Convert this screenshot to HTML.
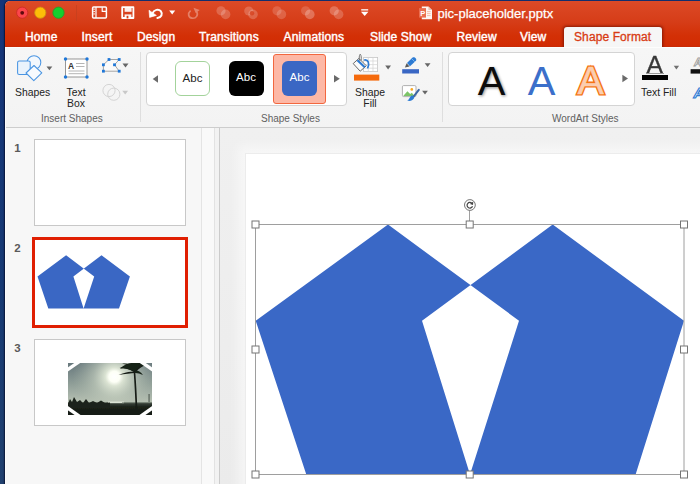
<!DOCTYPE html>
<html><head><meta charset="utf-8"><title>pic-placeholder.pptx</title>
<style>
html,body{margin:0;padding:0}
body{width:700px;height:484px;overflow:hidden;position:relative;background:linear-gradient(#15357a,#173a74 60%,#21416f);font-family:"Liberation Sans",sans-serif}
body *{position:absolute}
#win{left:5px;top:1px;width:700px;height:490px;background:#f1f1f1;border-radius:5px 0 0 0;overflow:hidden;box-shadow:-0.5px 0 1.5px rgba(0,0,25,.65)}
#tb{left:0;top:0;width:700px;height:46px;background:linear-gradient(#dc4a27 0,#d63d18 45%,#d33006 75%,#d22b03 96%,#c62a06 100%)}
.tab{letter-spacing:0.14px;top:30.3px;height:14px;line-height:14px;font-size:12px;color:#fff;white-space:nowrap;-webkit-text-stroke:0.3px #fff;text-shadow:0 0 1px rgba(255,235,225,.5)}
#atabw{left:550px;top:18px;width:130px;height:29px;overflow:hidden}
#atab{left:14px;top:9px;width:98px;height:24px;background:#f6f6f6;border-radius:3px 3px 0 0;box-shadow:0 -0.5px 3px 0.5px rgba(110,15,0,.75)}
#rib{left:0;top:46px;width:700px;height:79px;border-top:1px solid #fdfdfd;background:linear-gradient(#f6f6f6,#f3f3f3);border-bottom:1px solid #cdcdcd}
.lbl{font-size:10.4px;color:#222;white-space:nowrap;line-height:11px;text-align:center}
.grp{font-size:10px;color:#616161;white-space:nowrap;line-height:11px;top:112.7px}
.sep{width:1px;background:#dedede;top:52px;height:70px}
.gal{background:#fff;border:1px solid #d4d4d4;border-radius:4px;box-sizing:border-box}
.abc{width:35px;height:35px;top:61.4px;box-sizing:border-box;border-radius:6px;font-size:11.5px;line-height:33.8px;text-align:center}
.num{left:14.3px;font-size:11.5px;font-weight:bold;color:#5a5a5a;line-height:12px}
.th{background:#fff;border:1px solid #c8c8c8;box-sizing:border-box}
svg{left:0;top:0;overflow:visible}
</style></head><body>
<div id="win"><div id="tb"></div><div id="rib"></div></div>
<div id="atabw"><div id="atab"></div></div>
<div class="tab" style="left:25px">Home</div>
<div class="tab" style="left:81.5px">Insert</div>
<div class="tab" style="left:137px">Design</div>
<div class="tab" style="left:199px">Transitions</div>
<div class="tab" style="left:283.5px">Animations</div>
<div class="tab" style="left:370px">Slide Show</div>
<div class="tab" style="left:456.5px">Review</div>
<div class="tab" style="left:520px">View</div>
<div class="tab" style="left:574px;color:#d83b14;-webkit-text-stroke:0.3px #d83b14;text-shadow:none;letter-spacing:0.1px">Shape Format</div>
<div id="title" style="left:437.5px;top:6px;font-size:13px;line-height:16px;color:#fff;white-space:nowrap;-webkit-text-stroke:0.25px #fff">pic-placeholder.pptx</div>
<svg id="tbi" width="700" height="48" viewBox="0 0 700 48">
 <!-- traffic lights -->
 <circle cx="22.2" cy="12.7" r="5.6" fill="#fc464b" stroke="#cc2a25" stroke-width="0.9"/>
 <circle cx="22.2" cy="12.8" r="1.9" fill="#5e090c"/>
 <circle cx="40.3" cy="12.7" r="5.6" fill="#fdbd08" stroke="#cf8f14" stroke-width="0.9"/>
 <circle cx="58.5" cy="12.7" r="5.6" fill="#14cf2e" stroke="#23a128" stroke-width="0.9"/>
 <line x1="76.5" y1="5" x2="76.5" y2="21" stroke="#c4401f" stroke-width="1" opacity=".7"/>
 <!-- sidebar/file icon -->
 <g fill="none" stroke="#fff" stroke-width="1.5" stroke-linejoin="round">
  <rect x="92.6" y="7" width="13.8" height="11" rx="1"/>
  <path d="M96 7 V18" stroke-width="1.2"/>
  <path d="M102.2 7.2 V11.4 H106.2" stroke-width="1.2"/>
 </g>
 <g fill="#fff"><rect x="93.4" y="8.6" width="1.4" height="1.1"/><rect x="93.4" y="11" width="1.4" height="1.1"/><rect x="93.4" y="13.4" width="1.4" height="1.1"/></g>
 <!-- save icon -->
 <path d="M122.2 7.2 H133.4 V18 H122.2 Z" fill="none" stroke="#fff" stroke-width="1.8" stroke-linejoin="round"/>
 <rect x="124.6" y="7.4" width="7" height="4.4" fill="#fff" opacity=".92"/>
 <path d="M124.6 18.2 V14.4 H131.4 V18.2 Z" fill="#fff" opacity=".95"/>
 <rect x="126.6" y="15.8" width="1.8" height="2.6" fill="#d4401a"/>
 <!-- undo -->
 <path d="M152.4 13.4 C154 9.6 158.6 8.6 160.8 11.2 C163 14 161.4 17.6 157.4 17.9" fill="none" stroke="#fff" stroke-width="2" stroke-linecap="round"/>
 <path d="M149 10.2 L149.6 17.4 L156.4 15.4 Z" fill="#fff" stroke="#fff" stroke-width="0.6" stroke-linejoin="round"/>
 <path d="M169.2 10.6 H175.2 L172.2 14.4 Z" fill="#fff"/>
 <!-- redo faded -->
 <g opacity=".33">
 <path d="M190.2 11.2 C187.6 13.4 188.2 17.6 192 18.2 C196.2 18.8 198.6 15 196.6 11.6" fill="none" stroke="#fff" stroke-width="1.7" stroke-linecap="round"/>
 <path d="M194.6 7 L194.4 12.6 L199.4 11.6 Z" fill="#fff" transform="rotate(-25 196 10)"/>
 </g>
 <g fill="#fff">
  <circle cx="221" cy="10.8" r="4.6" opacity=".2"/><circle cx="225.6" cy="14.4" r="4.8" opacity=".2"/>
  <circle cx="248.8" cy="11" r="4.6" opacity=".2"/><circle cx="253" cy="14.4" r="4.8" opacity=".2"/>
  <circle cx="277" cy="10.8" r="4.6" opacity=".16"/><circle cx="281.4" cy="14.4" r="4.8" opacity=".18"/>
  <circle cx="305.6" cy="10.8" r="4.6" opacity=".16"/><circle cx="309.8" cy="14.4" r="4.8" opacity=".26"/>
  <circle cx="334.2" cy="10.8" r="4.6" opacity=".24"/><circle cx="338.6" cy="14.4" r="4.8" opacity=".2"/>
 </g>
 <circle cx="252" cy="13.2" r="2.2" fill="#d74320" opacity=".85"/>
 <!-- customize arrow -->
 <rect x="361.2" y="9.2" width="7" height="1.3" fill="#fff"/>
 <path d="M361 11.8 H368.4 L364.7 16 Z" fill="#fff"/>
 <!-- doc icon -->
 <path d="M421.8 6.5 H428.4 L432 10 V19.3 H421.8 Z" fill="#fdf6f3"/>
 <path d="M428.4 6.5 V10 H432 Z" fill="#e9c4b8"/>
 <path d="M427 11.6 H430.6 M427 13.6 H430.6 M427 15.6 H430.6" stroke="#f3b9a2" stroke-width="0.9"/>
 <rect x="419" y="8.1" width="7" height="9.5" fill="#ea6e50"/>
 <text x="420.3" y="15.5" font-family="Liberation Sans, sans-serif" font-size="7.5" font-weight="bold" fill="#fff">P</text>
</svg>
<!-- RIBBON -->
<div class="sep" style="left:139.5px"></div>
<div class="sep" style="left:442px"></div>
<div class="lbl" style="left:15px;top:87px">Shapes</div>
<div class="lbl" style="left:66px;top:87px;width:20px">Text<br>Box</div>
<div class="grp" style="left:41px">Insert Shapes</div>
<div class="grp" style="left:261px">Shape Styles</div>
<div class="grp" style="left:552px">WordArt Styles</div>
<div class="gal" style="left:146px;top:52px;width:201px;height:54px"></div>
<div style="left:273px;top:54px;width:53px;height:50px;background:#fdb8a6;border:1px solid #f2673f;box-sizing:border-box;border-radius:3px"></div>
<div class="abc" style="left:175px;background:#fff;border:1.5px solid #a3d39b;color:#222">Abc</div>
<div class="abc" style="left:228.5px;background:#000;color:#fff">Abc</div>
<div class="abc" style="left:282px;background:#3a67c4;color:#fff">Abc</div>
<div class="lbl" style="left:354px;top:87px;width:32px">Shape<br>Fill</div>
<div class="gal" style="left:448px;top:52px;width:187px;height:54px"></div>
<div class="lbl" style="left:641px;top:87px">Text Fill</div>
<div style="left:647.3px;top:50.8px;font-size:23.2px;line-height:28px;color:#383838;-webkit-text-stroke:0.35px #383838;transform:scaleX(1.06);transform-origin:50% 50%">A</div><div style="left:646px;top:73px;width:18px;height:1px;background:#999"></div>
<div style="left:642px;top:74.7px;width:26px;height:5.6px;background:#000"></div>
<svg width="700" height="130" viewBox="0 0 700 130">
 <!-- Shapes icon -->
 <g fill="#eaf3fc" stroke="#4a95e2" stroke-width="1.05" stroke-linejoin="round">
  <circle cx="34" cy="62.5" r="6.8" fill="#f3f8fd"/>
  <rect x="17.6" y="61" width="12.6" height="13.5" rx="1.6"/>
  <path d="M34 65.5 L41.8 72.8 L33.8 80.6 L26 73 Z" fill="#f6fafe"/>
 </g>
 <path d="M46.5 66.4 H52.3 L49.4 70.2 Z" fill="#666"/>
 <!-- Text box icon -->
 <rect x="65.5" y="59" width="21.5" height="18" fill="#fff" stroke="#8c8c8c" stroke-width="0.9"/>
 <g fill="#1f77d8"><circle cx="65.5" cy="59" r="1.7"/><circle cx="87" cy="59" r="1.7"/><circle cx="65.5" cy="77" r="1.7"/><circle cx="87" cy="77" r="1.7"/></g>
 <text x="68" y="69" font-family="Liberation Sans, sans-serif" font-size="8.5" font-weight="bold" fill="#333">A</text>
 <g stroke="#b5b5b5" stroke-width="1"><path d="M76 63.5H84.5M76 66.5H84.5M68.5 71H84.5M68.5 73.7H84.5"/></g>
 <!-- edit points icon -->
 <path d="M109 59.5 L119.2 59.5 L114.5 64.8 L119.2 71.2 L103.4 71.2 L103.4 64.8 Z" fill="#fafafa" stroke="#9a9a9a" stroke-width="0.9"/>
 <g fill="#1f77d8"><rect x="107.6" y="58.1" width="2.8" height="2.8"/><rect x="117.8" y="58.1" width="2.8" height="2.8"/><rect x="113.1" y="63.4" width="2.8" height="2.8"/><rect x="117.8" y="69.8" width="2.8" height="2.8"/><rect x="102" y="69.8" width="2.8" height="2.8"/><rect x="102" y="63.4" width="2.8" height="2.8"/></g>
 <path d="M122.5 63.5 H128.5 L125.5 67.5 Z" fill="#666"/>
 <!-- merge shapes (disabled) -->
 <g fill="none" stroke="#d4d4d4" stroke-width="1"><circle cx="109" cy="90.5" r="6.1"/><circle cx="113.8" cy="94.2" r="6.1"/></g>
 <path d="M122.3 90.8 H128.1 L125.2 94.6 Z" fill="#c8c8c8"/>
 <!-- gallery arrows -->
 <path d="M152.7 79 L158 75.2 V82.8 Z" fill="#6a6a6a"/>
 <path d="M339.8 78.8 L334 75 V82.6 Z" fill="#6a6a6a"/>
 <path d="M628 78.5 L622.4 74.8 V82.2 Z" fill="#6a6a6a"/>
 <!-- Shape fill icon -->
 <rect x="354" y="74.6" width="25.3" height="6" fill="#f56a0c"/>
 <g>
  <rect x="363.6" y="57.4" width="14" height="14.2" fill="#fff" stroke="#c6c6c6" stroke-width="0.8"/>
  <path d="M363.6 61H377.6M363.6 64.6H377.6M363.6 68.2H377.6M368.3 57.4V71.6M373 57.4V71.6" stroke="#d2d2d2" stroke-width="0.7"/>
  <path d="M353.2 63.6 L358.9 58.4 L366.3 65.8 L360.2 71.2 Z" fill="#fbfbfb" stroke="#6a6a6a" stroke-width="1" stroke-linejoin="round"/>
  <path d="M357.4 60.2 L364.8 67.2" stroke="#2d7bd3" stroke-width="2.2" fill="none"/>
  <path d="M364.6 60 C368.4 59.6 369.6 63.4 367.8 67.6" fill="none" stroke="#2d7bd3" stroke-width="1.7" stroke-linecap="round"/>
  <path d="M359.8 60.8 C359 58 359 55.6 360.2 54.2 C361.4 55.4 361.4 58 361.2 60.4" fill="none" stroke="#6a6a6a" stroke-width="0.9"/>
 </g>
 <path d="M385.2 65.6 H391 L388.1 69.4 Z" fill="#666"/>
 <!-- Pen outline icon -->
 <rect x="402.2" y="69.2" width="16.8" height="4.3" fill="#3a67c4"/>
 <path d="M407 62.9 L412.6 57.6 C414.2 56.2 417.4 59.2 415.9 60.8 L410 66.2 Z" fill="#2d7bd3"/>
 <path d="M404.9 67.6 L406.6 63.3 L409.6 66.4 Z" fill="#5a5a5a"/>
 <path d="M411.6 58.6 L414.8 61.8" stroke="#8cc0f2" stroke-width="0.8"/>
 <path d="M424.7 63.2 H430.5 L427.6 67 Z" fill="#666"/>
 <!-- effects icon -->
 <rect x="402.4" y="85.6" width="13.6" height="11" rx="1.2" fill="#fff" stroke="#a8a8a8" stroke-width="0.9"/>
 <path d="M403.2 96 L407.4 91.2 L410.2 94 L411.8 92.8 L414.6 96 Z" fill="#7cc467"/>
 <circle cx="411.8" cy="89.4" r="1.35" fill="#f8a825"/>
 <path d="M418.8 89.8 L413 97.4" stroke="#3d66a3" stroke-width="2" stroke-linecap="round" fill="none"/>
 <path d="M411.6 95.4 C413.6 95.6 414.6 97 413.8 98.6 C412.6 100.8 409.8 101.4 407.2 100.6 C409.2 99.6 409.6 97 411.6 95.4 Z" fill="#2d7bd3"/>
 <path d="M422.1 90.8 H427.9 L425 94.6 Z" fill="#666"/>
 <!-- text fill dropdown -->
 <path d="M673.7 65.8 H679.1 L676.4 69.4 Z" fill="#707070"/>
 <!-- partial right icons -->
 <text x="694" y="65.6" font-family="Liberation Sans, sans-serif" font-size="11" font-style="italic" font-weight="bold" fill="#fff" stroke="#9a9a9a" stroke-width="0.8">A</text>
 <rect x="690.6" y="69.2" width="10" height="4.4" fill="#111"/>
 <text x="693.5" y="98" font-family="Liberation Sans, sans-serif" font-size="15" font-style="italic" font-weight="bold" fill="#dcebfb" stroke="#2d7bd3" stroke-width="1.1">A</text>
 <!-- wordart As -->
 <g font-family="Liberation Sans, sans-serif" font-size="41.5">
  <text x="477.8" y="94.6" fill="#000" opacity=".45" filter="url(#wab)">A</text>
  <text x="477.8" y="94.6" fill="#0c0c0c">A</text>
  <text x="527.8" y="94.8" fill="#3b6fca">A</text>
  <text x="577.4" y="94.3" font-size="38.5" textLength="26.4" lengthAdjust="spacingAndGlyphs" fill="#f57414" stroke="#f57414" stroke-width="3.2" stroke-linejoin="miter">A</text>
  <text x="577.4" y="94.3" font-size="38.5" textLength="26.4" lengthAdjust="spacingAndGlyphs" fill="#fbcdb0" stroke="#fbcdb0" stroke-width="0.4">A</text>
 </g>
 <defs><filter id="wab" x="-20%" y="-20%" width="140%" height="140%"><feOffset dx="0.8" dy="1"/><feGaussianBlur stdDeviation="1.4"/></filter></defs>
</svg>
<!-- CONTENT -->
<div id="left" style="left:5px;top:128px;width:196px;height:360px;background:#f7f7f7"></div>
<div style="left:201px;top:128px;width:13px;height:360px;background:#f9f9f9;border-left:1px solid #e4e4e4;box-sizing:border-box"></div>
<div style="left:214px;top:128px;width:5px;height:360px;background:#f2f2f2;border-left:1px solid #e2e2e2;box-sizing:border-box"></div>
<div id="edit" style="left:219px;top:128px;width:490px;height:360px;background:linear-gradient(#f0f0f0,#ebebeb);border-left:1px solid #cbcbcb;box-sizing:border-box"></div>
<div id="slide" style="left:245px;top:153px;width:470px;height:340px;background:#fff;border:1px solid #ececec;box-sizing:border-box;box-shadow:0 0 10px 7px rgba(255,255,255,.5)"></div>
<div style="left:5px;top:47px;width:1px;height:440px;background:#fcfcfc"></div>
<div class="num" style="top:142px">1</div>
<div class="num" style="top:242px">2</div>
<div class="num" style="top:342px">3</div>
<div class="th" style="left:34px;top:138.5px;width:152px;height:87px"></div>
<div class="th" style="left:32px;top:237px;width:156px;height:91px;border:3px solid #e01f02"></div>
<div class="th" style="left:34px;top:338.5px;width:152px;height:87px"></div>
<svg width="700" height="484" viewBox="0 0 700 484">
 <defs>
  <linearGradient id="sky" x1="0" y1="0" x2="0" y2="1">
   <stop offset="0" stop-color="#63747a"/><stop offset="0.4" stop-color="#8e9d97"/><stop offset="0.73" stop-color="#b6c0b2"/><stop offset="0.75" stop-color="#3a443a"/><stop offset="0.82" stop-color="#1b2119"/><stop offset="1" stop-color="#141812"/>
  </linearGradient>
  <radialGradient id="sun" cx="114.4" cy="376.7" r="42" gradientUnits="userSpaceOnUse">
   <stop offset="0" stop-color="#ffffff"/><stop offset="0.13" stop-color="#fdfff6"/><stop offset="0.22" stop-color="#dfe7d6" stop-opacity=".95"/><stop offset="0.5" stop-color="#c3cdbd" stop-opacity=".6"/><stop offset="1" stop-color="#aab6a8" stop-opacity="0"/>
  </radialGradient>
  <clipPath id="imgc"><rect x="68" y="363" width="84" height="52"/></clipPath>
  <filter id="bl" x="-5%" y="-5%" width="110%" height="110%"><feGaussianBlur stdDeviation="0.5"/></filter>
 </defs>
 <!-- mini shape -->
 <path fill="#3a67c4" fill-rule="evenodd" d="M37.5 276.4 L66.1 255.3 L94.2 276.4 L83.6 308.4 L48.3 308.4 Z M73.4 276.4 L101.5 255.3 L129.9 276.4 L119 308.4 L83.6 308.4 Z"/>
 <!-- thumbnail image -->
 <g clip-path="url(#imgc)">
  <g filter="url(#bl)">
  <rect x="66" y="361" width="88" height="56" fill="url(#sky)"/>
  <rect x="66" y="361" width="88" height="41" fill="url(#sun)"/>
  <rect x="108" y="401.6" width="16" height="1.6" fill="#e8efe0" opacity=".9"/>
  <rect x="122" y="402" width="30" height="1.2" fill="#7d8a7c" opacity=".7"/>
  <path d="M68 404 L70 399 L72 402 L74 397 L77 402 L80 400 L83 403 L86 399 L89 403 L93 401 L97 403 L101 400.5 L105 403 L110 402.5 L110 408 L68 408 Z" fill="#1c231b"/>
  <path d="M133.6 371 C134.4 382 135.2 396 135.8 412 L137.4 412 C137 396 136 381 135.2 371 Z" fill="#151a14"/>
  <path d="M134.5 371 C130 367 124 366 119.5 367.5 C125 368 130 369.5 134 372 C130 371 124 372.5 118.5 375 C125 374 131 373.4 135 373 C138 369 142 366 146.5 365 C142 365 137.5 366.5 135.5 369.5 C137 366 138 364 140 362.5 C136 363.5 134 366.5 134.5 371 Z" fill="#161c15"/>
  <path d="M134 368 C131 364.5 127 363 122 363.5 C127 364.5 131 366.5 134 370 Z" fill="#1a2019"/>
  <path d="M120 369 C124 364 130 362.5 135 363 C139 362 143 363 145.5 366 C141 365.5 138 367 136 370.5 L133 371.5 C129 368.5 124 368 120 369 Z" fill="#182018"/>
  <path d="M135 370 C138 370.5 141 372 143 375 C140 373.5 137 372.8 134.6 373 Z" fill="#182018"/>
  <rect x="148.6" y="394" width="0.9" height="8" fill="#39433a"/>
  </g>
 </g>
 <g stroke="#fff" stroke-width="3.4" fill="none">
  <path d="M65.5 371.2 L81 360.4"/><path d="M139 360.4 L154.5 371.2"/><path d="M65.5 406.5 L81 417.3"/><path d="M139 417.3 L154.5 406.5"/>
 </g>
 <!-- main shape -->
 <path fill="#3a68c6" fill-rule="evenodd" d="M255.7 320.7 L388 224.6 L519 320.7 L470 474.6 L306.3 474.6 Z M422 320.7 L552.7 224.6 L684 320.7 L635.6 474.6 L470 474.6 Z"/>
 <!-- selection -->
 <rect x="255.5" y="224.5" width="428.5" height="250" fill="none" stroke="#9e9e9e" stroke-width="1"/>
 <line x1="469.5" y1="210" x2="469.5" y2="224" stroke="#a0a0a0" stroke-width="1"/>
 <g fill="#fff" stroke="#757575" stroke-width="1">
  <rect x="252" y="221" width="7" height="7"/><rect x="466.2" y="221" width="7" height="7"/><rect x="680.5" y="221" width="7" height="7"/>
  <rect x="252" y="346" width="7" height="7"/><rect x="680.5" y="346" width="7" height="7"/>
  <rect x="252" y="471" width="7" height="7"/><rect x="466.2" y="471" width="7" height="7"/><rect x="680.5" y="471" width="7" height="7"/>
  <circle cx="469.9" cy="205" r="5.4"/>
 </g>
 <path d="M471.9 203.3 A2.8 2.8 0 1 0 472.5 206.2" fill="none" stroke="#444" stroke-width="1.2"/>
 <path d="M473.3 201.6 L473 205 L469.9 203.9 Z" fill="#444"/>
</svg>
</body></html>
